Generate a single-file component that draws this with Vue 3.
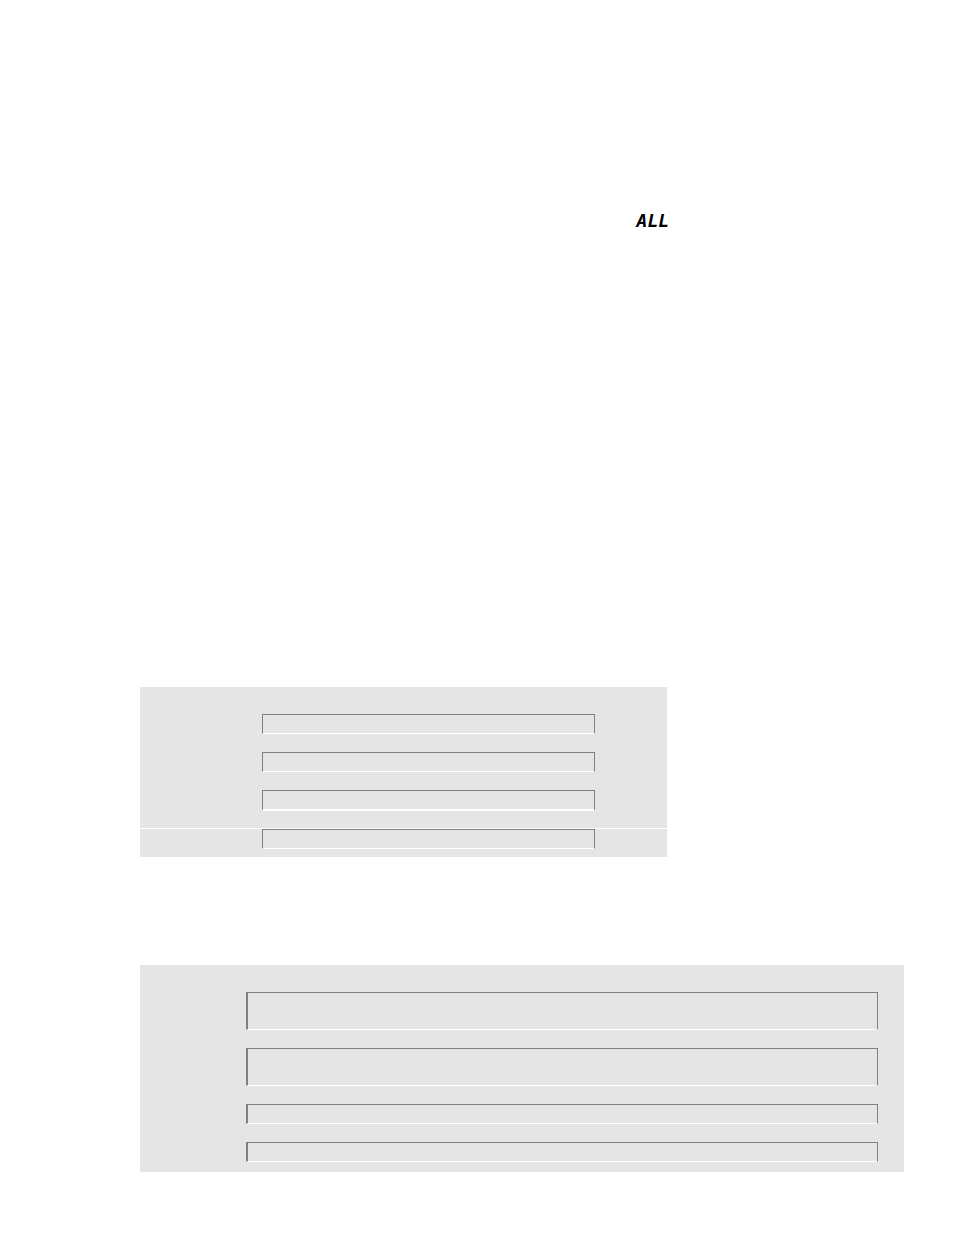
<template>
  <main class="page">
    <p class="readout">ALL</p>

    <section class="panel panel-small">
      <div class="group">
        <div class="field"></div>
        <div class="field"></div>
        <div class="field field-thick"></div>
      </div>
      <div class="group group-last">
        <div class="field"></div>
      </div>
    </section>

    <section class="panel panel-wide">
      <div class="group">
        <div
          v-for="(lines, index) in wideFields"
          :key="index"
          class="field"
          :class="{ 'field-tall': lines === 2 }"
        ></div>
      </div>
    </section>
  </main>
</template>

<script setup>
// number of text lines each field has room for
const wideFields = [2, 2, 1, 1]
</script>

<style>
body {
  background: #ffffff;
}
</style>

<style scoped>
.page {
  box-sizing: border-box;
  padding: 208px 50px 63px 140px;
  font-family: "DejaVu Sans Mono", monospace;
  color: #000000;
}

.readout {
  margin: 0 0 453px;
  padding-left: 65%;
  font-size: 18px;
  line-height: 26px;
  font-weight: bold;
  font-style: italic;
}

.group {
  display: flex;
  flex-direction: column;
  gap: 18px;
  background: #e5e5e5;
}

.panel-small {
  max-width: 527px;
  margin-bottom: 108px;
}

.panel-small .group {
  padding: 27px 72px 17px 122px;
}

.panel-small .group-last {
  margin-top: 1px;
  padding-top: 0;
  padding-bottom: 8px;
}

.panel-wide .group {
  padding: 27px 26px 10px 106px;
}

.field {
  box-sizing: border-box;
  height: 20px;
  border: 1px solid #808080;
  border-bottom-color: #ffffff;
}

.field-thick {
  height: 21px;
  border-bottom-width: 2px;
}

.field-tall {
  height: 38px;
}

.panel-wide .field {
  border-left-width: 2px;
}
</style>
